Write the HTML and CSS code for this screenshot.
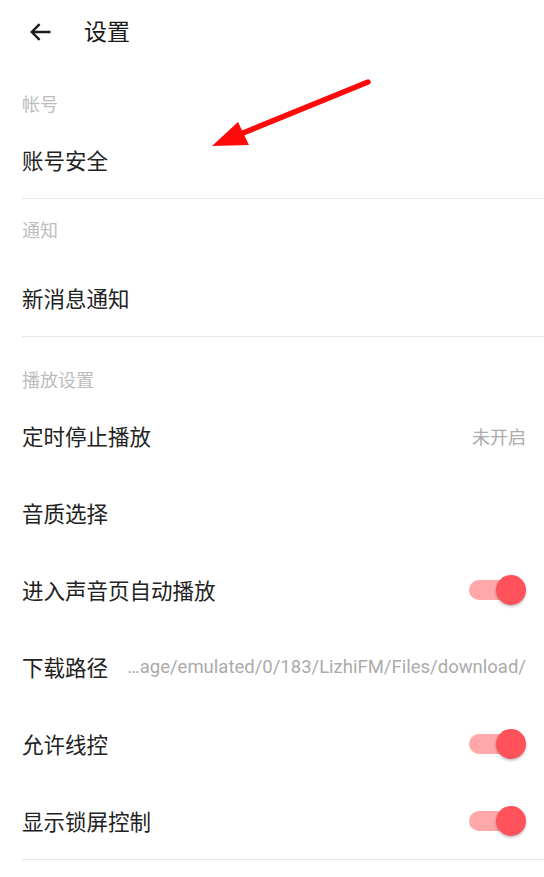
FILE: index.html
```html
<!DOCTYPE html>
<html lang="zh">
<head>
<meta charset="utf-8">
<title>设置</title>
<link rel="stylesheet" href="styles.css">
</head>
<body>
<div class="page">
  <header class="topbar">
    <svg class="back" width="22" height="20" viewBox="0 0 22 20" aria-hidden="true">
      <path d="M21.5 10H2.8M10.6 2.2L2.8 10l7.8 7.8" fill="none" stroke="#1a1a1a" stroke-width="2.4"/>
    </svg>
    <h1 class="title">设置</h1>
  </header>

  <section class="group">
    <div class="group-label">帐号</div>
    <div class="row"><span class="row-text">账号安全</span></div>
  </section>

  <section class="group">
    <div class="group-label group-label--even">通知</div>
    <div class="row"><span class="row-text">新消息通知</span></div>
  </section>

  <section class="group">
    <div class="group-label">播放设置</div>
    <div class="row"><span class="row-text">定时停止播放</span><span class="row-value">未开启</span></div>
    <div class="row"><span class="row-text">音质选择</span></div>
    <div class="row"><span class="row-text">进入声音页自动播放</span><span class="switch"><span class="track"></span><span class="knob"></span></span></div>
    <div class="row"><span class="row-text">下载路径</span><span class="path">…age/emulated/0/183/LizhiFM/Files/download/</span></div>
    <div class="row"><span class="row-text">允许线控</span><span class="switch"><span class="track"></span><span class="knob"></span></span></div>
    <div class="row"><span class="row-text">显示锁屏控制</span><span class="switch"><span class="track"></span><span class="knob"></span></span></div>
  </section>

  <svg class="annotation" width="544" height="877" viewBox="0 0 544 877" aria-hidden="true">
    <line x1="368" y1="82" x2="238" y2="135" stroke="#ff0a0a" stroke-width="5.5" stroke-linecap="round"/>
    <polygon points="212,146 238,122 249,145" fill="#ff0a0a"/>
  </svg>
</div>
</body>
</html>
```

FILE: styles.css
```css
html, body {
  margin: 0;
  padding: 0;
  background: #ffffff;
}

body {
  font-family: "Noto Sans CJK SC", "Noto Sans", sans-serif;
  color: #222222;
}

.page {
  position: relative;
  width: 544px;
  min-height: 877px;
  overflow: hidden;
}

.topbar {
  height: 61px;
  box-sizing: border-box;
  padding: 0 0 1px 29px;
  display: flex;
  align-items: center;
}

.back {
  display: block;
  flex: none;
  margin-top: 3px;
}

.title {
  margin: 0 0 0 33px;
  font-size: 23px;
  font-weight: 400;
  line-height: 30px;
  color: #1a1a1a;
}

.group {
  margin-left: 22px;
  border-bottom: 1px solid #e8e8e8;
}

.group-label {
  padding: 32px 0 8px;
  font-size: 18px;
  line-height: 20px;
  color: #bdbdbd;
}

.group-label--even {
  padding: 20px 0 20px;
}

.row {
  height: 77px;
  display: flex;
  align-items: center;
  padding-right: 18px;
}

.row-text {
  flex: none;
  font-size: 21.5px;
  line-height: 28px;
  color: #222222;
}

.row-value {
  margin-left: auto;
  font-size: 18px;
  color: #ababab;
}

.path {
  flex: 1;
  min-width: 0;
  margin-left: 18px;
  text-align: right;
  white-space: nowrap;
  overflow: hidden;
  font-family: Roboto, "Noto Sans", sans-serif;
  font-size: 18.5px;
  color: #ababab;
}

.switch {
  position: relative;
  margin-left: auto;
  width: 57px;
  height: 30px;
  flex: none;
}

.track {
  position: absolute;
  left: 0;
  top: 5px;
  width: 50px;
  height: 20px;
  border-radius: 10px;
  background: #ffa7a9;
}

.knob {
  position: absolute;
  right: 0;
  top: 0;
  width: 30px;
  height: 30px;
  border-radius: 50%;
  background: #ff525a;
  box-shadow: 0 1.5px 3px rgba(0, 0, 0, 0.28);
}

.annotation {
  position: absolute;
  left: 0;
  top: 0;
  pointer-events: none;
}
```
